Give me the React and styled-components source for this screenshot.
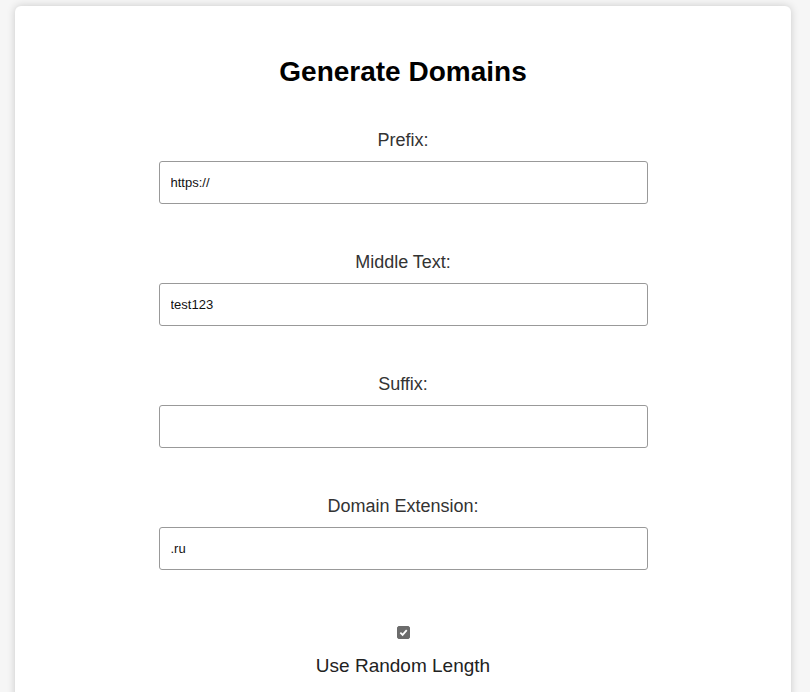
import React, { useState } from "react";
import styled, { createGlobalStyle } from "styled-components";

const GlobalStyle = createGlobalStyle`
  html, body {
    margin: 0;
    padding: 0;
    background: #f6f6f6;
    font-family: "Liberation Sans", Arial, sans-serif;
  }
`;

const Page = styled.div`
  padding: 6px 19px 0 15px;
  height: 692px;
  box-sizing: border-box;
  overflow: hidden;
`;

const Card = styled.div`
  background: #fff;
  border-radius: 6px;
  box-shadow: 0 0 8px rgba(0, 0, 0, 0.18);
  padding: 50px 20px 40px;
  min-height: 760px;
  display: flex;
  flex-direction: column;
  align-items: center;
`;

const Title = styled.h2`
  margin: 0 0 42px;
  font-size: 28px;
  line-height: 32px;
  font-weight: bold;
  color: #000;
`;

const Field = styled.div`
  display: flex;
  flex-direction: column;
  align-items: center;
  margin-bottom: 48px;
`;

const Label = styled.label`
  font-size: 18px;
  line-height: 21px;
  color: #333;
  margin-bottom: 10px;
`;

const Input = styled.input`
  width: 489px;
  height: 43px;
  box-sizing: border-box;
  border: 1px solid #999;
  border-radius: 3px;
  padding: 0 11px;
  font-family: "Liberation Sans", Arial, sans-serif;
  font-size: 13px;
  color: #111;
  outline: none;
`;

const CheckRow = styled.label`
  display: flex;
  flex-direction: column;
  align-items: center;
  margin-top: 8px;
  cursor: pointer;
`;

const Box = styled.span`
  width: 13px;
  height: 13px;
  border-radius: 2px;
  background: ${(p) => (p.checked ? "#6c6c6c" : "#fff")};
  border: 1px solid #6c6c6c;
  box-sizing: border-box;
  display: flex;
  align-items: center;
  justify-content: center;
  margin-bottom: 16px;
`;

const CheckText = styled.span`
  font-size: 19px;
  line-height: 22px;
  color: #222;
`;

const fields = [
  { label: "Prefix:", value: "https://" },
  { label: "Middle Text:", value: "test123" },
  { label: "Suffix:", value: "" },
  { label: "Domain Extension:", value: ".ru" },
];

export default function App() {
  const [values, setValues] = useState(fields.map((f) => f.value));
  const [random, setRandom] = useState(true);

  return (
    <>
      <GlobalStyle />
      <Page>
        <Card>
          <Title>Generate Domains</Title>
          {fields.map((f, i) => (
            <Field key={f.label}>
              <Label>{f.label}</Label>
              <Input
                value={values[i]}
                onChange={(e) => {
                  const next = [...values];
                  next[i] = e.target.value;
                  setValues(next);
                }}
              />
            </Field>
          ))}
          <CheckRow onClick={() => setRandom(!random)}>
            <Box checked={random}>
              {random && (
                <svg width="9" height="9" viewBox="0 0 10 10">
                  <path
                    d="M1.5 5.2 L4 7.6 L8.6 2.4"
                    fill="none"
                    stroke="#fff"
                    strokeWidth="2"
                  />
                </svg>
              )}
            </Box>
            <CheckText>Use Random Length</CheckText>
          </CheckRow>
        </Card>
      </Page>
    </>
  );
}
